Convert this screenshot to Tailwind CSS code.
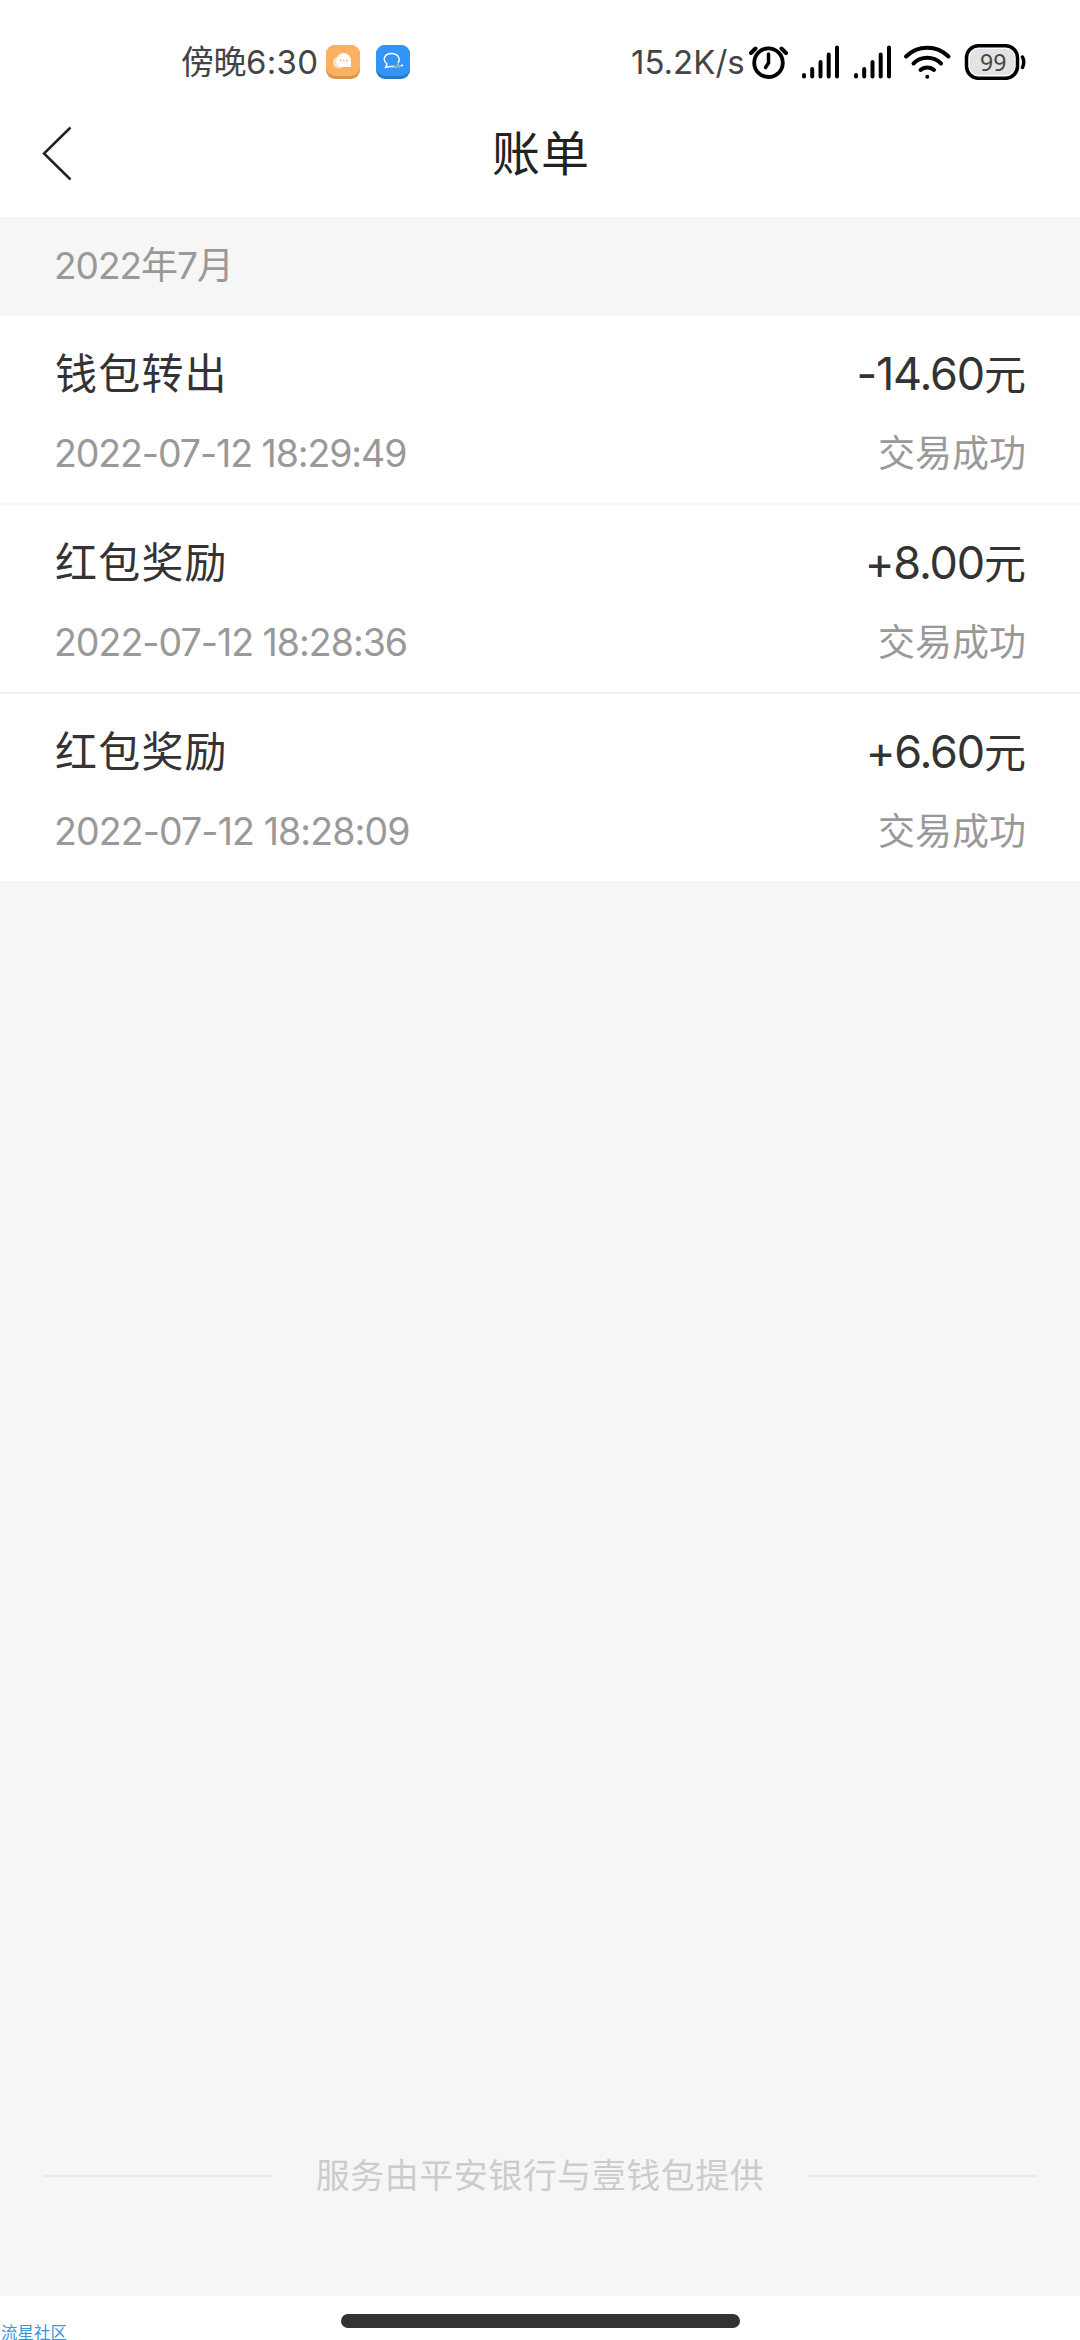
<!DOCTYPE html>
<html lang="zh-CN">
<head>
<meta charset="utf-8">
<title>账单</title>
<script src="https://cdn.jsdelivr.net/npm/@tailwindcss/browser@4"></script>
</head>
<body class="w-[1080px] h-[2340px] overflow-hidden bg-white font-['Inter','Noto_Sans_CJK_SC',sans-serif] text-[#333] flex flex-col relative">
  <!-- status bar -->
  <div class="h-[109px] shrink-0 flex items-center pt-[15px] pl-[181px] whitespace-nowrap text-[#444]">
    <div class="w-[145px] flex items-center leading-[40px]"><span class="text-[33px] tracking-[-0.5px]">傍晚</span><span class="text-[33px] tracking-[0.3px]">6:30</span></div>
    <svg class="w-[34px] h-[34px]" viewBox="0 0 34 34"><rect width="34" height="34" rx="9" fill="#d99550"/><rect width="34" height="31" rx="9" fill="#fbb161"/><circle cx="13" cy="17.500" r="6" fill="#fde0c0"/><path d="M17.500 8a7.500 7.500 0 0 1 7.500 7.500V22H15a5 5 0 0 1-4.500-6.500A7.500 7.500 0 0 1 17.500 8z" fill="#fff"/><path d="M14 15.500h1.500m1.500 0h1.500m1.500 0h1.500" stroke="#fbb161" stroke-width="1.500"/></svg>
    <svg class="w-[34px] h-[34px] ml-4" viewBox="0 0 34 34"><rect width="34" height="34" rx="9" fill="#2b78c8"/><rect width="34" height="31" rx="9" fill="#3395fa"/><path d="M19 21.500h-5l-4.500 1 1.500-3.500C5.500 14 9 8.500 15.500 8.500S25 14 22 18" fill="none" stroke="#fff" stroke-width="1.400"/><path d="M17.500 20.500l2.500 2 2-3.500 1 3 2-1.500" fill="none" stroke="#a9b4b8" stroke-width="1.400"/><path d="M25 21l2-1" stroke="#fff" stroke-width="1.500"/></svg>
    <div class="w-[117px] ml-[221px] text-[33px] leading-[40px]">15.2K/s</div>
    <svg class="w-[40px] h-[36px]" viewBox="747 44 40 36" fill="none" stroke="#000" stroke-linecap="round"><circle cx="767.500" cy="62.700" r="14.300" stroke-width="3.800"/><path d="M767.500 54v9l-3 4.500" stroke-width="3.500" stroke-linejoin="round"/><path d="M750 53l4.500-4.500M785 53l-4.500-4.500" stroke-width="4"/></svg>
    <svg class="w-[38px] h-[36px] ml-[14px]" viewBox="801 44 38 36" stroke="#000" stroke-width="4" stroke-linecap="round"><path d="M803 75v1.500M811.200 69v7.500M819.500 62v14.500M827.700 54.500v22M836 47.500v29"/></svg>
    <svg class="w-[38px] h-[36px] ml-[14px]" viewBox="801 44 38 36" stroke="#000" stroke-width="4" stroke-linecap="round"><path d="M803 75v1.500M811.200 69v7.500M819.500 62v14.500M827.700 54.500v22M836 47.500v29"/></svg>
    <svg class="w-[50px] h-[36px] ml-[10px]" viewBox="901 44 50 36" fill="none" stroke="#000" stroke-width="4" stroke-linecap="round"><path d="M905 56.500a30 30 0 0 1 42.500 0M912.500 63.500a19.500 19.500 0 0 1 27.500 0M919.500 70a10 10 0 0 1 13.500 0"/><circle cx="926.300" cy="76.700" r="2" fill="#000" stroke="none"/></svg>
    <div class="relative w-[62px] h-[36px] ml-[12px]">
      <svg class="w-[62px] h-[36px]" viewBox="963 44 62 36" fill="none" stroke="#000"><rect x="965.500" y="45.800" width="51" height="32.500" rx="12" fill="#fff" stroke-width="3.500"/><rect x="969" y="49" width="44.500" height="26" rx="8" fill="#e3e3e3" stroke="none"/><path d="M1021.500 57q2.500 5 0 10.500" stroke-width="3.500" stroke-linecap="round"/></svg>
      <span class="absolute left-[16px] top-[6px] text-[23px] leading-[25px] font-['Noto_Sans']">99</span>
    </div>
  </div>
  <!-- title bar -->
  <header class="h-[108px] shrink-0 grid grid-cols-3 items-start text-[#222]">
    <svg class="w-[34px] h-[56px] ml-[40px] mt-[16px]" viewBox="40 125 34 56" fill="none" stroke="#222" stroke-width="2.500"><path d="M70.500 127.500L44 153.500l26.500 26"/></svg>
    <h1 class="text-center text-[48px] leading-[60px] mt-[15px] pl-[2px] tracking-[1px]">账单</h1>
  </header>
  <main class="h-[2079px] shrink-0 bg-[#f6f6f6] flex flex-col">
    <h2 class="h-[99px] shrink-0 pl-[54px] pt-[21px] text-[37px] leading-[56px] text-[#999] whitespace-nowrap tracking-[-1px]">2022年7月</h2>
    <ul class="shrink-0 bg-white">
      <li class="h-[189px] px-[55px] pt-[28px] border-b-2 border-[#f3f3f3]">
        <div class="flex justify-between h-[60px] leading-[60px] whitespace-nowrap"><span class="text-[42px] tracking-[1.2px]">钱包转出</span><span class="mr-[-1px] text-[42px]"><span class="text-[45px] tracking-[-1.2px]">-14.60</span>元</span></div>
        <div class="flex justify-between leading-[60px] mt-[20px] whitespace-nowrap text-[#999]"><span class="ml-[-1px] text-[37.5px] tracking-[-1.1px]">2022-07-12 18:29:49</span><span class="text-[37px] mr-[-1px]">交易成功</span></div>
      </li>
      <li class="h-[189px] px-[55px] pt-[28px] border-b-2 border-[#f3f3f3]">
        <div class="flex justify-between h-[60px] leading-[60px] whitespace-nowrap"><span class="text-[42px] tracking-[1.2px]">红包奖励</span><span class="mr-[-1px] text-[42px]"><span class="text-[45px] tracking-[-1.2px]">+8.00</span>元</span></div>
        <div class="flex justify-between leading-[60px] mt-[20px] whitespace-nowrap text-[#999]"><span class="ml-[-1px] text-[37.5px] tracking-[-1px]">2022-07-12 18:28:36</span><span class="text-[37px] mr-[-1px]">交易成功</span></div>
      </li>
      <li class="h-[187px] px-[55px] pt-[28px]">
        <div class="flex justify-between h-[60px] leading-[60px] whitespace-nowrap"><span class="text-[42px] tracking-[1.2px]">红包奖励</span><span class="mr-[-1px] text-[42px]"><span class="text-[45px] tracking-[-1.2px]">+6.60</span>元</span></div>
        <div class="flex justify-between leading-[60px] mt-[20px] whitespace-nowrap text-[#999]"><span class="ml-[-1px] text-[37.5px] tracking-[-0.9px]">2022-07-12 18:28:09</span><span class="text-[37px] mr-[-1px]">交易成功</span></div>
      </li>
    </ul>
    <footer class="mt-auto mb-[90px] h-[60px] px-[43px] flex items-center justify-between whitespace-nowrap text-[#ccc]">
      <span class="w-[229px] h-[2px] bg-[#e8e8e8]"></span>
      <span class="text-[34px] leading-[60px] tracking-[0.5px]">服务由平安银行与壹钱包提供</span>
      <span class="w-[229px] h-[2px] bg-[#e8e8e8]"></span>
    </footer>
  </main>
  <!-- gesture area -->
  <div class="h-[44px] shrink-0 flex justify-center pt-[18px]"><div class="w-[399px] h-[14px] rounded-full bg-[#333]"></div></div>
  <span class="absolute left-[1px] top-[2323px] text-[16.5px] leading-[20px] text-[#3b95de]">流星社区</span>
</body>
</html>
